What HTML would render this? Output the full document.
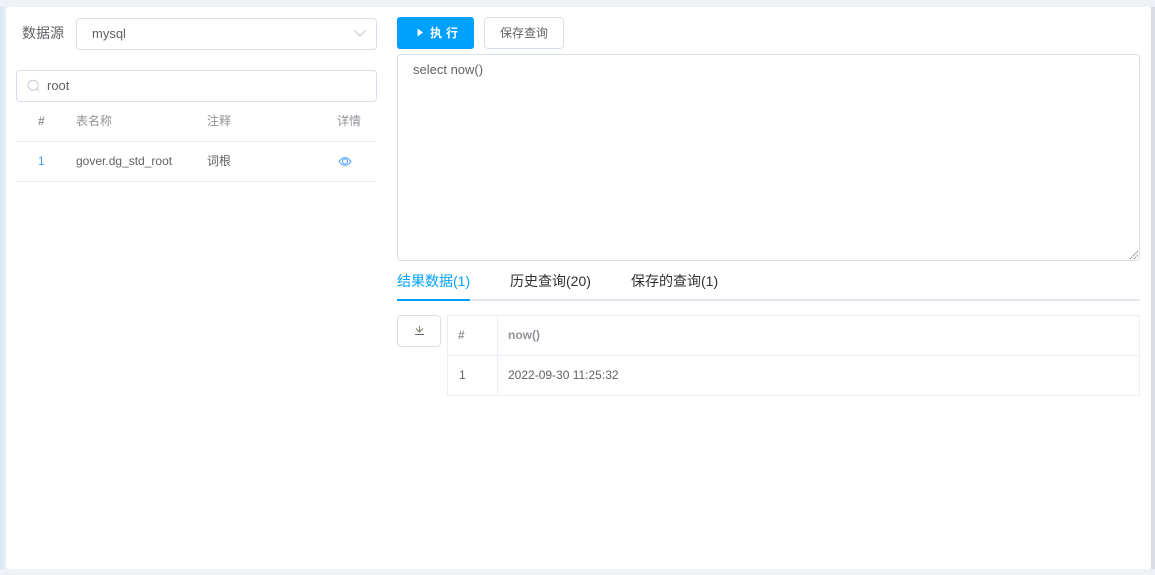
<!DOCTYPE html>
<html lang="zh">
<head>
<meta charset="utf-8">
<style>
html,body{margin:0;padding:0;width:1155px;height:575px;overflow:hidden;background:#eef1f5;}
body{position:relative;font-family:"Liberation Sans","Noto Sans CJK SC",sans-serif;color:#606266;font-size:12px;}
div,span,svg{position:absolute;box-sizing:border-box;}
.t{white-space:nowrap;line-height:16px;}
.box{background:#fff;border:1px solid #d9dfe8;border-radius:4px;}
.h{height:1px;background:#ebeef5;}
.v{width:1px;background:#ebeef5;}
.th{color:#909399;font-weight:bold;}
.thc{color:#909399;}
</style>
</head>
<body>
<div style="left:0;top:7px;width:6px;height:562px;background:linear-gradient(90deg,#d5e6f3,#e6eff6);"></div>
<div style="left:1151px;top:7px;width:4px;height:562px;background:#dcdde3;"></div>
<div style="left:6px;top:7px;width:1145px;height:562px;background:#fff;border-radius:4px;"></div>

<div class="t" style="left:22px;top:25px;font-size:14px;">数据源</div>
<div class="box" style="left:76px;top:18px;width:301px;height:32px;"></div>
<div class="t" style="left:92px;top:26px;font-size:13px;">mysql</div>
<svg style="left:353px;top:29px" width="14" height="10" viewBox="0 0 14 10"><path d="M1.500 1.500 7 7l5.500-5.500" fill="none" stroke="#c0c4cc" stroke-width="1"/></svg>

<div class="box" style="left:16px;top:70px;width:361px;height:32px;"></div>
<svg style="left:27px;top:79px" width="14" height="14" viewBox="0 0 14 14"><circle cx="6.200" cy="6.200" r="5" fill="none" stroke="#c8ccd4" stroke-width="1"/><path d="M10 10l2.200 2.200" stroke="#c8ccd4" stroke-width="1"/></svg>
<div class="t" style="left:47px;top:78px;font-size:13px;">root</div>

<div class="t th" style="left:38px;top:113px;">#</div>
<div class="t thc" style="left:76px;top:113px;">表名称</div>
<div class="t thc" style="left:207px;top:113px;">注释</div>
<div class="t thc" style="left:337px;top:113px;">详情</div>
<div class="h" style="left:16px;top:141px;width:361px;"></div>
<div class="t" style="left:38px;top:153px;color:#409eff;">1</div>
<div class="t" style="left:76px;top:153px;">gover.dg_std_root</div>
<div class="t" style="left:207px;top:153px;">词根</div>
<svg style="left:338px;top:156px" width="14" height="11" viewBox="0 0 14 11"><path d="M1 5.500C3 2.800 5 1.600 7 1.600s4 1.200 6 3.900C11 8.200 9 9.400 7 9.400S3 8.200 1 5.500z" fill="none" stroke="#409eff" stroke-width="1"/><circle cx="7" cy="5.500" r="2.500" fill="none" stroke="#409eff" stroke-width="1"/></svg>
<div class="h" style="left:16px;top:181px;width:361px;"></div>

<div style="left:397px;top:17px;width:77px;height:32px;background:#00a0ff;border-radius:3px;"></div>
<svg style="left:417px;top:28px" width="7" height="9" viewBox="0 0 7 9"><path d="M0.500 0.500 6 4.500 0.500 8.500z" fill="#fff"/></svg>
<div class="t" style="left:430px;top:25px;color:#fff;font-size:12px;font-weight:bold;letter-spacing:4px;">执行</div>
<div class="box" style="left:484px;top:17px;width:80px;height:32px;"></div>
<div class="t" style="left:500px;top:25px;">保存查询</div>

<div class="box" style="left:397px;top:54px;width:743px;height:207px;"></div>
<div class="t" style="left:413px;top:62px;font-size:13px;">select now()</div>
<svg style="left:1129px;top:250px" width="10" height="10" viewBox="0 0 10 10"><path d="M1 9 9 1M5 9 9 5" stroke="#555" stroke-width="1" stroke-dasharray="1 1"/></svg>

<div class="t" style="left:397px;top:273px;font-size:14px;color:#00a0ff;">结果数据(1)</div>
<div class="t" style="left:510px;top:273px;font-size:14px;color:#303133;">历史查询(20)</div>
<div class="t" style="left:631px;top:273px;font-size:14px;color:#303133;">保存的查询(1)</div>
<div style="left:397px;top:299px;width:743px;height:2px;background:#e4e7ed;"></div>
<div style="left:397px;top:299px;width:73px;height:2px;background:#00a0ff;"></div>

<div class="box" style="left:397px;top:315px;width:44px;height:32px;"></div>
<svg style="left:414px;top:325px" width="11" height="11" viewBox="0 0 11 11"><path d="M5.500 1v5.500M2 3.500l3.500 3.500 3.500-3.500" fill="none" stroke="#7a7f70" stroke-width="1"/><path d="M1 9.500h9" stroke="#666" stroke-width="1"/></svg>

<div style="left:447px;top:315px;width:693px;height:81px;border:1px solid #ebeef5;"></div>
<div class="h" style="left:447px;top:355px;width:693px;"></div>
<div class="v" style="left:497px;top:315px;height:81px;"></div>
<div class="t th" style="left:458px;top:327px;">#</div>
<div class="t th" style="left:508px;top:327px;">now()</div>
<div class="t" style="left:459px;top:367px;">1</div>
<div class="t" style="left:508px;top:367px;">2022-09-30 11:25:32</div>
</body>
</html>
